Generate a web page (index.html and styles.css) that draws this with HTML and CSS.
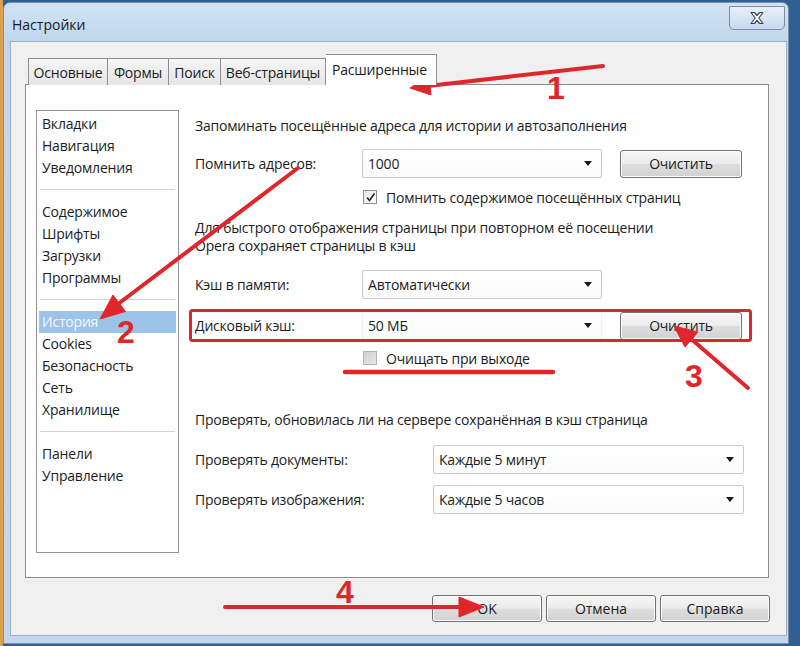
FILE: index.html
```html
<!DOCTYPE html>
<html lang="ru">
<head>
<meta charset="utf-8">
<title>Настройки</title>
<link rel="stylesheet" href="styles.css">
</head>
<body>
<div class="desktop">
  <div class="window">
    <div class="titlebar">
      <span class="title">Настройки</span>
      <div class="close">
        <svg width="20" height="16" viewBox="0 0 20 16"><path d="M4 2.5h3.5l2.5 3 2.5-3H16l-4.2 5.5 4.2 5.5h-3.5l-2.5-3-2.5 3H4l4.2-5.5z" fill="#fff" stroke="#3a4656" stroke-width="1.2" stroke-linejoin="round"/></svg>
      </div>
    </div>
    <div class="client">
      <div class="tabset">
        <div class="tabs">
          <div class="tab t1">Основные</div>
          <div class="tab t2">Формы</div>
          <div class="tab t3">Поиск</div>
          <div class="tab t4">Веб-страницы</div>
          <div class="tab active">Расширенные</div>
        </div>
        <div class="panel">
          <ul class="nav">
            <li>Вкладки</li>
            <li>Навигация</li>
            <li>Уведомления</li>
            <li class="sep"></li>
            <li>Содержимое</li>
            <li>Шрифты</li>
            <li>Загрузки</li>
            <li>Программы</li>
            <li class="sep"></li>
            <li class="selected">История</li>
            <li>Cookies</li>
            <li>Безопасность</li>
            <li>Сеть</li>
            <li>Хранилище</li>
            <li class="sep"></li>
            <li>Панели</li>
            <li>Управление</li>
          </ul>
          <div class="content">
            <p class="text h1">Запоминать посещённые адреса для истории и автозаполнения</p>
            <div class="row r1">
              <span class="label">Помнить адресов:</span>
              <div class="select"><span>1000</span><i class="arrow"></i></div>
              <div class="button">Очистить</div>
            </div>
            <div class="check c1"><span class="box checked"><svg width="11" height="11" viewBox="0 0 11 11"><path d="M2 5.5l2.5 3L9.5 1.5" fill="none" stroke="#222" stroke-width="1.6"/></svg></span>Помнить содержимое посещённых страниц</div>
            <p class="text p2">Для быстрого отображения страницы при повторном её посещении<br>Opera сохраняет страницы в кэш</p>
            <div class="row r2">
              <span class="label">Кэш в памяти:</span>
              <div class="select"><span>Автоматически</span><i class="arrow"></i></div>
            </div>
            <div class="row r3">
              <span class="label">Дисковый кэш:</span>
              <div class="select faint"><span>50 МБ</span><i class="arrow"></i></div>
              <div class="button">Очистить</div>
            </div>
            <div class="check c2"><span class="box disabled"></span>Очищать при выходе</div>
            <p class="text h3">Проверять, обновилась ли на сервере сохранённая в кэш страница</p>
            <div class="row r4">
              <span class="label wide">Проверять документы:</span>
              <div class="select long"><span>Каждые 5 минут</span><i class="arrow"></i></div>
            </div>
            <div class="row r5">
              <span class="label wide">Проверять изображения:</span>
              <div class="select long"><span>Каждые 5 часов</span><i class="arrow"></i></div>
            </div>
          </div>
        </div>
      </div>
      <div class="buttons">
        <div class="button small">OK</div>
        <div class="button small">Отмена</div>
        <div class="button small">Справка</div>
      </div>
    </div>
  </div>
  <svg class="annot" width="800" height="646" viewBox="0 0 800 646">
    <g fill="#e1262b" stroke="#e1262b">
      <rect x="190.5" y="310.5" width="560" height="30" rx="2" fill="none" stroke-width="3"/>
      <line x1="345" y1="372" x2="553" y2="372" stroke-width="4.5" stroke-linecap="round"/>
      <line x1="603" y1="66" x2="428" y2="86" stroke-width="4" stroke-linecap="round"/>
      <polygon points="410,88 431,95 429,76" stroke-width="1"/>
      <line x1="298" y1="168" x2="118" y2="304" stroke-width="4" stroke-linecap="round"/>
      <polygon points="100,319 125.5,311.5 113,295" stroke-width="1"/>
      <line x1="748" y1="388" x2="690" y2="338" stroke-width="4" stroke-linecap="round"/>
      <polygon points="674,326 698,332 685,347" stroke-width="1"/>
      <line x1="225" y1="607" x2="462" y2="607" stroke-width="4" stroke-linecap="round"/>
      <polygon points="484,607 459,597 459,617" stroke-width="1"/>
    </g>
    <g class="num" fill="#e1262b">
      <text x="547" y="99">1</text>
      <text x="117" y="343">2</text>
      <text x="685" y="387">3</text>
      <text x="336" y="603">4</text>
    </g>
  </svg>
</div>
</body>
</html>
```

FILE: styles.css
```css
* { box-sizing: border-box; }
html, body { margin: 0; padding: 0; }
body {
  width: 800px;
  height: 646px;
  overflow: hidden;
  font-family: "Open Sans", "Noto Sans", "DejaVu Sans", sans-serif;
  font-size: 14px;
  color: #1c1c1c;
  background: linear-gradient(90deg, #d8a24e 0, #d8a24e 3px, #2f5f93 3px, #2f5f93 100%);
}
.desktop {
  position: relative;
  width: 800px;
  height: 646px;
  padding: 2px 0 0 3px;
}
.window {
  width: 786px;
  height: 642px;
  border: 1px solid #7c8fa8;
  border-radius: 7px 7px 0 0;
  background: linear-gradient(180deg, #d2e3f4 0, #bfd6ee 38px, #c2d7ed 100%);
  padding: 0 1px 0 6px;
}
.titlebar {
  height: 38px;
  display: flex;
  align-items: flex-start;
}
.title {
  padding: 12px 0 0 2px;
  font-size: 14px;
  color: #1a1a1a;
}
.close {
  margin: 3px 2px 0 auto;
  width: 56px;
  height: 24px;
  border: 1px solid #7d8ea4;
  border-radius: 0 0 5px 5px;
  background: linear-gradient(180deg, #e8f0f9 0, #d6e4f3 50%, #c9daed 100%);
  display: flex;
  align-items: center;
  justify-content: center;
}
.client {
  width: 777px;
  height: 595px;
  border: 1px solid #9fb0c4;
  background: #f0f0f0;
}
.tabset {
  margin: 13px 0 0 14px;
  width: 744px;
}
.tabs {
  display: flex;
  align-items: flex-end;
  height: 30px;
  padding-left: 3px;
  position: relative;
  z-index: 1;
  margin-bottom: -1px;
}
.tab {
  height: 27px;
  border: 1px solid #8c8e94;
  border-bottom: none;
  border-right: none;
  background: linear-gradient(180deg, #f5f5f5 0, #e6e6e6 100%);
  display: flex;
  align-items: center;
  justify-content: center;
  padding-top: 1px;
  font-size: 14px;
  letter-spacing: -0.2px;
}
.t1 { width: 79px; }
.t2 { width: 61px; }
.t3 { width: 52px; }
.t4 { width: 106px; border-right: 1px solid #8c8e94; }
.tab.active {
  width: 111px;
  height: 31px;
  background: #fff;
  border: 1px solid #8c8e94;
  border-bottom: none;
  border-left: none;
  justify-content: flex-start;
  padding: 0 0 2px 6px;
}
.panel {
  height: 494px;
  border: 1px solid #8c8e94;
  background: #fff;
  display: flex;
  align-items: flex-start;
}
.nav {
  list-style: none;
  margin: 25px 0 0 10px;
  padding: 2px 2px 0 2px;
  width: 143px;
  height: 443px;
  border: 1px solid #8f9297;
  flex: none;
}
.nav li {
  height: 22px;
  line-height: 22px;
  padding-left: 3px;
  white-space: nowrap;
  letter-spacing: -0.2px;
}
.nav li.sep {
  padding: 10px 1px 0 1px;
}
.nav li.sep::after {
  content: "";
  display: block;
  height: 1px;
  background: #d4d4d4;
}
.nav li.selected {
  background: #9dc3e8;
  color: #f4f8fc;
}
.content {
  margin-left: 16px;
  padding-top: 33px;
  flex: 1;
  letter-spacing: -0.2px;
}
.text {
  margin: 0;
  line-height: 16px;
  white-space: nowrap;
}
.text.p2 { line-height: 18px; }
.row {
  display: flex;
  align-items: center;
  height: 29px;
}
.label {
  width: 167px;
  flex: none;
  white-space: nowrap;
}
.label.wide { width: 238px; }
.select {
  width: 240px;
  height: 29px;
  border: 1px solid #c9c9c9;
  border-radius: 2px;
  background: linear-gradient(180deg, #ffffff 0, #fafafa 100%);
  display: flex;
  align-items: center;
  padding: 0 5px;
  flex: none;
}
.select.faint { border-color: #f0f0f0; }
.select.long { width: 311px; }
.select span { flex: 1; }
.arrow {
  width: 0;
  height: 0;
  border-left: 4.5px solid transparent;
  border-right: 4.5px solid transparent;
  border-top: 5px solid #1a1a1a;
  margin-right: 4px;
}
.button {
  margin-left: 18px;
  width: 122px;
  height: 28px;
  border: 1px solid #727272;
  border-radius: 3px;
  background: linear-gradient(180deg, #f6f6f6 0, #ececec 48%, #dddddd 52%, #d2d2d2 100%);
  box-shadow: inset 0 0 0 1px #fcfcfc;
  display: flex;
  align-items: center;
  justify-content: center;
  flex: none;
}
.r1 { margin-top: 15px; }
.c1 { margin-top: 11px; }
.p2 { margin-top: 14px; }
.r2 { margin-top: 15px; }
.r3 { margin-top: 12px; }
.c2 { margin-top: 10px; }
.h3 { margin-top: 46px; }
.r4 { margin-top: 17px; }
.r5 { margin-top: 11px; }
.check {
  display: flex;
  align-items: center;
  height: 16px;
  padding-left: 168px;
  white-space: nowrap;
}
.box {
  width: 14px;
  height: 14px;
  border: 1px solid #8e8f8f;
  margin-right: 9px;
  background: linear-gradient(135deg, #e6e6e6 0, #ffffff 100%);
  display: flex;
  align-items: center;
  justify-content: center;
  flex: none;
}
.box.disabled {
  border-color: #b4b4b4;
  background: linear-gradient(135deg, #d0d0d0 0, #e8e8e8 100%);
}
.buttons {
  display: flex;
  justify-content: flex-end;
  gap: 4px;
  margin-top: 17px;
  padding-right: 16px;
}
.button.small {
  margin-left: 0;
  width: 110px;
  height: 27px;
}
.annot {
  position: absolute;
  left: 0;
  top: 0;
  pointer-events: none;
}
.num text {
  font-family: "Liberation Sans", Arial, sans-serif;
  font-weight: bold;
  font-size: 32px;
}
```
